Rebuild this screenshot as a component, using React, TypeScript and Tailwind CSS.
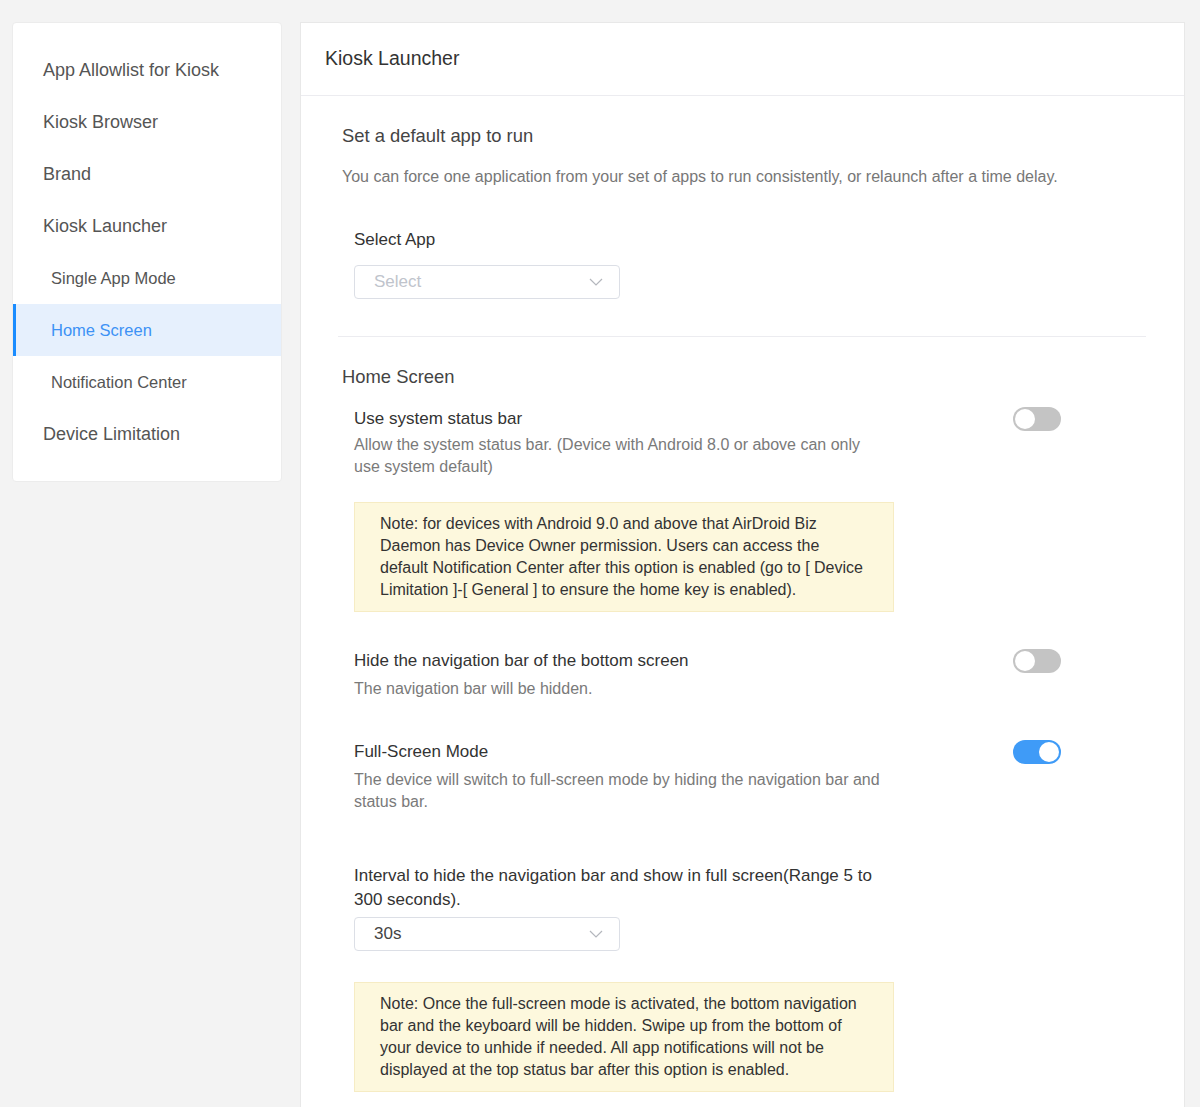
import React from "react";

const navItems = [
    { label: "App Allowlist for Kiosk", sub: false },
    { label: "Kiosk Browser", sub: false },
    { label: "Brand", sub: false },
    { label: "Kiosk Launcher", sub: false },
    { label: "Single App Mode", sub: true },
    { label: "Home Screen", sub: true, active: true },
    { label: "Notification Center", sub: true },
    { label: "Device Limitation", sub: false },
];

function Chevron() {
    return (
        <svg width="14" height="8" viewBox="0 0 14 8" fill="none">
            <path d="M1 1l6 6 6-6" stroke="#b4b7bd" strokeWidth="1.2" />
        </svg>
    );
}

function SelectBox({ value, placeholder }: { value?: string; placeholder?: string }) {
    return (
        <div className="flex items-center justify-between w-[266px] h-[34px] border border-[#dcdfe6] rounded-[4px] pl-[19px] pr-[16px] bg-white">
            <span className={value ? "text-[17px] text-[#444]" : "text-[17px] text-[#c0c4cc]"}>
                {value ?? placeholder}
            </span>
            <Chevron />
        </div>
    );
}

function Toggle({ on }: { on?: boolean }) {
    return (
        <div
            className={
                on
                    ? "w-[48px] h-[24px] rounded-full bg-[#3f9bf7] p-[2px] flex justify-end shrink-0"
                    : "w-[48px] h-[24px] rounded-full bg-[#c4c4c4] p-[2px] flex justify-start shrink-0"
            }
        >
            <div className="w-[20px] h-[20px] rounded-full bg-white" />
        </div>
    );
}

function Note({ children }: { children: React.ReactNode }) {
    return (
        <div className="w-[540px] bg-[#fdf8dd] border border-[#f6ecc4] pl-[25px] pr-[27px] py-[10px] text-[16px] leading-[22px] text-[#333]">
            {children}
        </div>
    );
}

function SettingRow({ title, desc, on, loose }: { title: string; desc: string; on?: boolean; loose?: boolean }) {
    return (
        <div className="flex justify-between items-start w-[707px]">
            <div className="w-[530px]">
                <div className="text-[17px] leading-[26px] text-[#333]">{title}</div>
                <div className={loose ? "mt-[4px] text-[16px] leading-[22px] text-[#7a7a7a]" : "mt-[2px] text-[16px] leading-[22px] text-[#7a7a7a]"}>
                    {desc}
                </div>
            </div>
            <div className="mt-[1px]">
                <Toggle on={on} />
            </div>
        </div>
    );
}

export default function App() {
    return (
        <div
            className="min-h-screen bg-[#f3f3f3] flex items-start gap-[18px] pl-[12px] pr-[15px] pt-[22px]"
            style={{ fontFamily: '"Liberation Sans", Arial, sans-serif' }}
        >
            {/* Sidebar */}
            <div className="w-[270px] shrink-0 bg-white border border-[#ececec] rounded-[4px] pt-[21px] pb-[21px]">
                {navItems.map((item) => (
                    <div
                        key={item.label}
                        className={
                            item.active
                                ? "h-[52px] flex items-center bg-[#e6f0fd] border-l-[3px] border-[#1a8cff] pl-[35px] text-[16.5px] text-[#3d92f5]"
                                : item.sub
                                    ? "h-[52px] flex items-center pl-[38px] text-[16.5px] text-[#555]"
                                    : "h-[52px] flex items-center pl-[30px] text-[18px] text-[#555]"
                        }
                    >
                        {item.label}
                    </div>
                ))}
            </div>

            {/* Main */}
            <div className="flex-1 bg-white border border-[#e8e8e8] min-h-[1120px]">
                <div className="h-[73px] flex items-center pl-[24px] border-b border-[#ececf0] text-[19.5px] text-[#333]">
                    Kiosk Launcher
                </div>

                <div className="pl-[37px] pr-[38px] pt-[28px] pb-[40px]">
                    <div className="pl-[4px]">
                        <div className="text-[18.4px] leading-[24px] text-[#444]">Set a default app to run</div>
                        <div className="mt-[18px] text-[16px] leading-[22px] text-[#777]">
                            You can force one application from your set of apps to run consistently, or relaunch after a time delay.
                        </div>
                    </div>

                    <div className="pl-[16px] mt-[40px]">
                        <div className="text-[17px] leading-[24px] text-[#333]">Select App</div>
                        <div className="mt-[13px]">
                            <SelectBox placeholder="Select" />
                        </div>
                    </div>

                    <div className="mt-[37px] border-t border-[#ececf0]" />

                    <div className="pl-[4px] mt-[28px] text-[18.4px] leading-[24px] text-[#444]">Home Screen</div>

                    <div className="pl-[16px] mt-[17px]">
                        <SettingRow
                            title="Use system status bar"
                            desc="Allow the system status bar. (Device with Android 8.0 or above can only use system default)"
                        />

                        <div className="mt-[24px]">
                            <Note>
                                Note: for devices with Android 9.0 and above that AirDroid Biz Daemon has Device Owner permission. Users can access the default Notification Center after this option is enabled (go to [ Device Limitation ]-[ General ] to ensure the home key is enabled).
                            </Note>
                        </div>

                        <div className="mt-[36px]">
                            <SettingRow
                                loose
                                title="Hide the navigation bar of the bottom screen"
                                desc="The navigation bar will be hidden."
                            />
                        </div>

                        <div className="mt-[39px]">
                            <SettingRow
                                loose
                                on
                                title="Full-Screen Mode"
                                desc="The device will switch to full-screen mode by hiding the navigation bar and status bar."
                            />
                        </div>

                        <div className="mt-[51px] w-[530px] text-[17px] leading-[24px] text-[#333]">
                            Interval to hide the navigation bar and show in full screen(Range 5 to 300 seconds).
                        </div>
                        <div className="mt-[5px]">
                            <SelectBox value="30s" />
                        </div>

                        <div className="mt-[31px]">
                            <Note>
                                Note: Once the full-screen mode is activated, the bottom navigation bar and the keyboard will be hidden. Swipe up from the bottom of your device to unhide if needed. All app notifications will not be displayed at the top status bar after this option is enabled.
                            </Note>
                        </div>
                    </div>
                </div>
            </div>
        </div>
    );
}
